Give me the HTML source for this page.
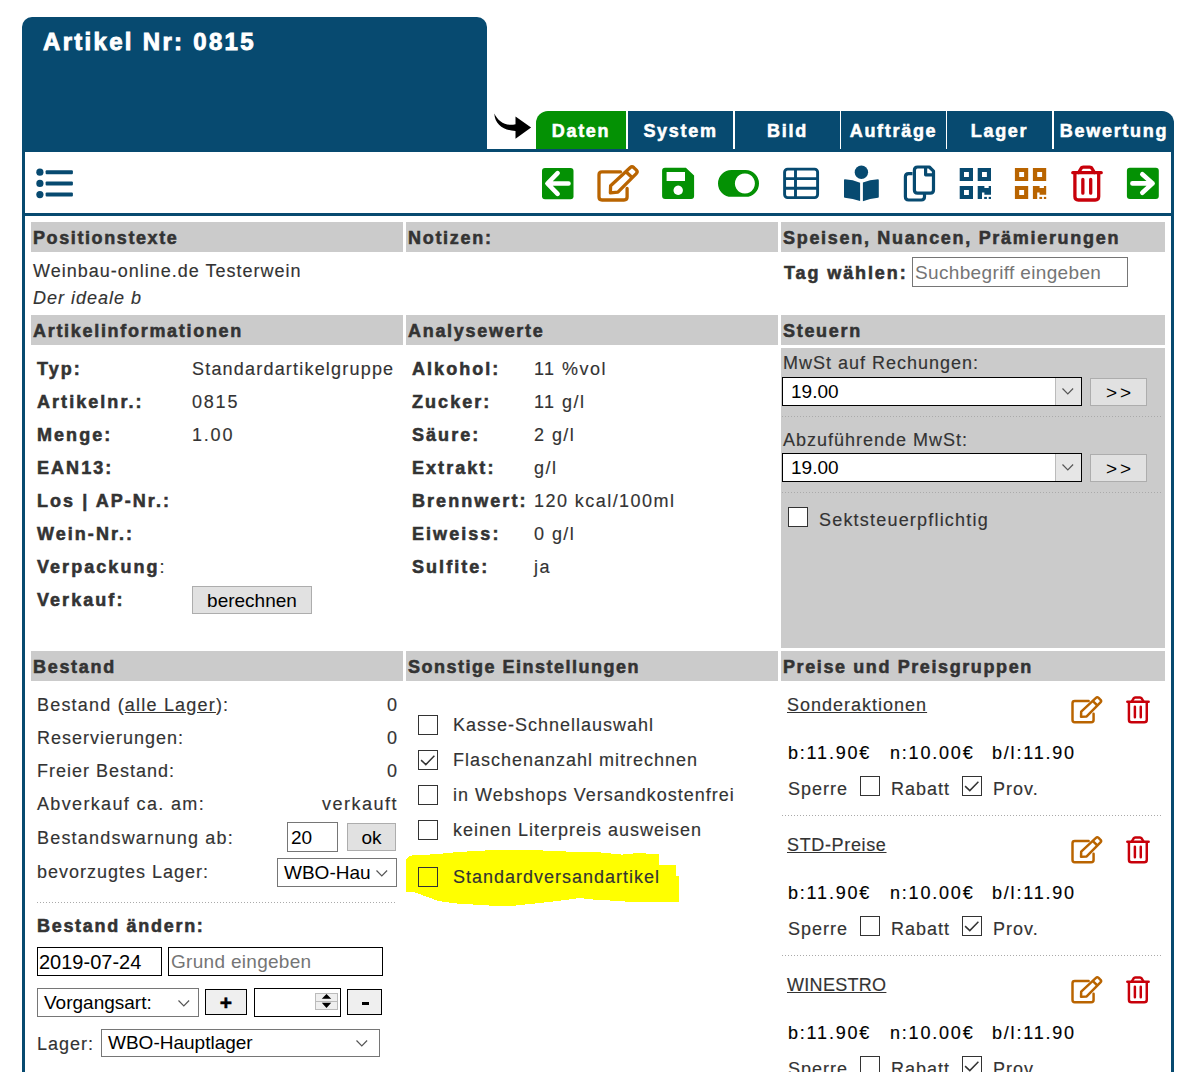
<!DOCTYPE html>
<html><head><meta charset="utf-8">
<style>
html,body{margin:0;padding:0;background:#fff;width:1190px;height:1072px;overflow:hidden;position:relative}
body{font-family:"Liberation Sans",sans-serif;color:#333}
div,span{box-sizing:border-box}
.a{position:absolute}
.blue{background:#074a70}
.t{position:absolute;font-size:18px;line-height:20px;white-space:nowrap;letter-spacing:1px;-webkit-text-stroke:0.15px currentColor}
.b{font-weight:bold;letter-spacing:1.7px;-webkit-text-stroke:0.55px currentColor}
.n{letter-spacing:1.8px}
.hd{position:absolute;background:#cbcbcb;height:30px}
.hd span{position:absolute;left:2px;top:6px;font-size:18px;line-height:20px;font-weight:bold;letter-spacing:1.7px;-webkit-text-stroke:0.55px #333;white-space:nowrap;color:#333}
.tab{position:absolute;top:111px;height:38px;background:#074a70;color:#fff;font-weight:bold;font-size:18px;letter-spacing:1.7px;-webkit-text-stroke:0.55px #fff;text-align:center;line-height:20px;padding-top:10px;white-space:nowrap}
.inp,.sel,.btn{position:absolute;background:#fff;border:1px solid #767676}
.inp span,.sel span,.btn span{position:absolute;font-size:19px;line-height:22px;color:#000;white-space:nowrap}
.btn{background:#e1e1e1;border-color:#adadad}
.bk{border-color:#000}
.dot{position:absolute;height:1px;background-image:linear-gradient(to right,#aaa 50%,transparent 50%);background-size:3px 1px}
.cb{position:absolute;width:20px;height:20px;border:1px solid #333;background:#fff}
.cb svg{position:absolute;left:-1px;top:-1px}
.dd{position:absolute;right:0;top:0;bottom:0;width:26px;background:#e6e6e6;border-left:1px solid #bbb}
.chev{position:absolute;width:12px;height:7px}
</style></head><body>
<div class="a blue" style="left:22px;top:17px;width:465px;height:135px;border-radius:10px 10px 0 0"></div>
<div class="t b" style="left:43px;top:29px;font-size:24px;line-height:26px;color:#fff;letter-spacing:2.3px;-webkit-text-stroke:0.9px #fff">Artikel Nr: 0815</div>
<div class="tab" style="left:536px;width:90px;background:#049104;border-top-left-radius:12px;">Daten</div>
<div class="tab" style="left:628px;width:105px;">System</div>
<div class="tab" style="left:735px;width:105px;">Bild</div>
<div class="tab" style="left:841px;width:105px;">Aufträge</div>
<div class="tab" style="left:947px;width:105px;">Lager</div>
<div class="tab" style="left:1054px;width:120px;border-top-right-radius:12px;">Bewertung</div>
<div class="a blue" style="left:22px;top:149px;width:1152px;height:3px"></div>
<div class="a blue" style="left:22px;top:149px;width:3px;height:930px"></div>
<div class="a blue" style="left:1171px;top:149px;width:3px;height:930px"></div>
<div class="a blue" style="left:25px;top:213px;width:1146px;height:3px"></div>
<div class="hd" style="left:31px;top:222px;width:372px"><span style="letter-spacing:1.6px">Positionstexte</span></div>
<div class="hd" style="left:406px;top:222px;width:372px"><span style="">Notizen:</span></div>
<div class="hd" style="left:781px;top:222px;width:384px"><span style="">Speisen, Nuancen, Prämierungen</span></div>
<div class="hd" style="left:31px;top:315px;width:372px"><span style="">Artikelinformationen</span></div>
<div class="hd" style="left:406px;top:315px;width:372px"><span style="">Analysewerte</span></div>
<div class="hd" style="left:781px;top:315px;width:384px"><span style="">Steuern</span></div>
<div class="hd" style="left:31px;top:651px;width:372px"><span style="">Bestand</span></div>
<div class="hd" style="left:406px;top:651px;width:372px"><span style="letter-spacing:1.5px">Sonstige Einstellungen</span></div>
<div class="hd" style="left:781px;top:651px;width:384px"><span style="letter-spacing:1.6px">Preise und Preisgruppen</span></div>
<div class="a" style="left:781px;top:348px;width:384px;height:300px;background:#cbcbcb"></div>
<div class="t " style="left:33px;top:261px;">Weinbau-online.de Testerwein</div>
<div class="t " style="left:33px;top:288px;font-style:italic">Der ideale b</div>
<div class="t b" style="left:784px;top:263px;letter-spacing:1.9px">Tag wählen:</div>
<div class="inp" style="left:912px;top:257px;width:216px;height:30px"><span style="left:2px;top:4px;color:#757575;letter-spacing:0.35px">Suchbegriff eingeben</span></div>
<div class="t b" style="left:37px;top:359px;letter-spacing:2.05px">Typ:</div>
<div class="t b" style="left:37px;top:392px;letter-spacing:2.05px">Artikelnr.:</div>
<div class="t b" style="left:37px;top:425px;letter-spacing:2.05px">Menge:</div>
<div class="t b" style="left:37px;top:458px;letter-spacing:2.05px">EAN13:</div>
<div class="t b" style="left:37px;top:491px;letter-spacing:2.05px">Los | AP-Nr.:</div>
<div class="t b" style="left:37px;top:524px;letter-spacing:2.05px">Wein-Nr.:</div>
<div class="t b" style="left:37px;top:557px;letter-spacing:2.05px">Verpackung<span style="font-weight:normal;-webkit-text-stroke:0.15px #333">:</span></div>
<div class="t b" style="left:37px;top:590px;letter-spacing:2.05px">Verkauf:</div>
<div class="t " style="left:192px;top:359px;letter-spacing:1.2px">Standardartikelgruppe</div>
<div class="t n" style="left:192px;top:392px;">0815</div>
<div class="t n" style="left:192px;top:425px;">1.00</div>
<div class="btn" style="left:192px;top:586px;width:120px;height:28px"><span style="left:0;right:0;top:3px;text-align:center">berechnen</span></div>
<div class="t b" style="left:412px;top:359px;letter-spacing:2.05px">Alkohol:</div>
<div class="t b" style="left:412px;top:392px;letter-spacing:2.05px">Zucker:</div>
<div class="t b" style="left:412px;top:425px;letter-spacing:2.05px">Säure:</div>
<div class="t b" style="left:412px;top:458px;letter-spacing:2.05px">Extrakt:</div>
<div class="t b" style="left:412px;top:491px;letter-spacing:2.05px">Brennwert:</div>
<div class="t b" style="left:412px;top:524px;letter-spacing:2.05px">Eiweiss:</div>
<div class="t b" style="left:412px;top:557px;letter-spacing:2.05px">Sulfite:</div>
<div class="t " style="left:534px;top:359px;letter-spacing:1.45px">11 %vol</div>
<div class="t " style="left:534px;top:392px;letter-spacing:1.45px">11 g/l</div>
<div class="t " style="left:534px;top:425px;letter-spacing:1.45px">2 g/l</div>
<div class="t " style="left:534px;top:458px;letter-spacing:1.45px">g/l</div>
<div class="t " style="left:534px;top:491px;letter-spacing:1.45px">120 kcal/100ml</div>
<div class="t " style="left:534px;top:524px;letter-spacing:1.45px">0 g/l</div>
<div class="t " style="left:534px;top:557px;letter-spacing:1.45px">ja</div>
<div class="t " style="left:783px;top:353px;">MwSt auf Rechungen:</div>
<div class="sel bk" style="left:782px;top:377px;width:300px;height:29px"><span style="left:8px;top:3px">19.00</span><div class="dd"><svg class="chev" style="left:6px;top:10px"><path d="M0.5,0.5 L5.8,5.8 L11.1,0.5" fill="none" stroke="#555" stroke-width="1.2"/></svg></div></div>
<div class="btn" style="left:1090px;top:378px;width:57px;height:28px"><span style="left:3px;right:0;top:3px;text-align:center;letter-spacing:3px">&gt;&gt;</span></div>
<div class="dot" style="left:782px;top:416px;width:381px"></div>
<div class="t " style="left:783px;top:430px;">Abzuführende MwSt:</div>
<div class="sel bk" style="left:782px;top:453px;width:300px;height:29px"><span style="left:8px;top:3px">19.00</span><div class="dd"><svg class="chev" style="left:6px;top:10px"><path d="M0.5,0.5 L5.8,5.8 L11.1,0.5" fill="none" stroke="#555" stroke-width="1.2"/></svg></div></div>
<div class="btn" style="left:1090px;top:454px;width:57px;height:28px"><span style="left:3px;right:0;top:3px;text-align:center;letter-spacing:3px">&gt;&gt;</span></div>
<div class="dot" style="left:782px;top:492px;width:381px"></div>
<div class="cb" style="left:788px;top:507px;"></div>
<div class="t " style="left:819px;top:510px;letter-spacing:1.2px">Sektsteuerpflichtig</div>
<div class="t " style="left:37px;top:695px;letter-spacing:1.2px">Bestand (<u>alle Lager</u>):</div>
<div class="t " style="left:37px;top:728px;">Reservierungen:</div>
<div class="t " style="left:37px;top:761px;">Freier Bestand:</div>
<div class="t " style="left:37px;top:794px;letter-spacing:1.35px">Abverkauf ca. am:</div>
<div class="t " style="left:37px;top:828px;letter-spacing:1.2px">Bestandswarnung ab:</div>
<div class="t " style="left:37px;top:862px;">bevorzugtes Lager:</div>
<div class="t" style="left:auto;right:792px;top:695px;letter-spacing:1px">0</div>
<div class="t" style="left:auto;right:792px;top:728px;letter-spacing:1px">0</div>
<div class="t" style="left:auto;right:792px;top:761px;letter-spacing:1px">0</div>
<div class="t" style="left:auto;right:792px;top:794px;letter-spacing:1.5px">verkauft</div>
<div class="inp" style="left:287px;top:822px;width:51px;height:30px"><span style="left:3px;top:4px">20</span></div>
<div class="btn" style="left:347px;top:823px;width:49px;height:28px"><span style="left:0;right:0;top:3px;text-align:center">ok</span></div>
<div class="sel" style="left:277px;top:858px;width:120px;height:29px"><span style="left:6px;top:3px">WBO-Hau</span><svg class="chev" style="right:8px;top:11px"><path d="M0.5,0.5 L5.8,5.8 L11.1,0.5" fill="none" stroke="#555" stroke-width="1.2"/></svg></div>
<div class="dot" style="left:37px;top:902px;width:359px"></div>
<div class="t b" style="left:37px;top:916px;">Bestand ändern:</div>
<div class="inp bk" style="left:37px;top:947px;width:125px;height:29px"><span style="left:1px;top:3px;font-size:20px">2019-07-24</span></div>
<div class="inp bk" style="left:168px;top:947px;width:215px;height:29px"><span style="left:2px;top:3px;color:#757575;letter-spacing:0.3px">Grund eingeben</span></div>
<div class="sel" style="left:37px;top:988px;width:162px;height:29px"><span style="left:6px;top:3px">Vorgangsart:</span><svg class="chev" style="right:8px;top:11px"><path d="M0.5,0.5 L5.8,5.8 L11.1,0.5" fill="none" stroke="#555" stroke-width="1.2"/></svg></div>
<div class="btn bk" style="left:205px;top:989px;width:42px;height:26px;background:#efefef"><span style="left:0;right:0;top:2px;text-align:center;font-weight:bold;font-size:21px;-webkit-text-stroke:0.5px #000">+</span></div>
<div class="inp bk" style="left:254px;top:988px;width:87px;height:29px"></div>
<svg class="a" style="left:315px;top:993px" width="24" height="18"><rect x="0.5" y="0.5" width="22" height="16" fill="#efefef" stroke="#bbb"/><line x1="1" y1="8.5" x2="22" y2="8.5" stroke="#bbb"/><path d="M6.8,5.7 L11.5,1 L16.2,5.7 Z M6.8,9.8 L16.2,9.8 L11.5,15 Z" fill="#000"/></svg>
<div class="btn bk" style="left:347px;top:989px;width:35px;height:26px;background:#efefef"><div class="a" style="left:14px;top:12px;width:7px;height:3px;background:#000"></div></div>
<div class="t " style="left:37px;top:1034px;">Lager:</div>
<div class="sel" style="left:101px;top:1029px;width:279px;height:28px"><span style="left:6px;top:2px">WBO-Hauptlager</span><svg class="chev" style="right:11px;top:10px"><path d="M0.5,0.5 L5.8,5.8 L11.1,0.5" fill="none" stroke="#555" stroke-width="1.2"/></svg></div>
<svg class="a" style="left:0;top:0" width="1190" height="1072" shape-rendering="crispEdges"><path fill="#ffff00" d="M406,860 L410,855.6 L437.3,854.1 L459.5,851.9 L494.8,850 L520,849.5 L580,852.1 L597.1,852.1 L622.4,854.6 L637.5,853.1 L658.7,854.1 L658.7,865.2 L675.8,865.2 L675.8,876.3 L678.8,876.3 L678.8,902 L632.4,902 L610.3,900.5 L593.1,899.5 L580,898 L551,901.8 L516,905.5 L488.7,905.5 L456.5,903.5 L438.3,901 L415.1,892.4 L406,891.9 Z"/></svg>
<div class="cb" style="left:418px;top:715px;"></div>
<div class="t " style="left:453px;top:715px;">Kasse-Schnellauswahl</div>
<div class="cb" style="left:418px;top:750px;"><svg width="20" height="20"><path d="M3.1,10.1 L7.8,14.6 L16.4,5.8" fill="none" stroke="#333" stroke-width="1.5"/></svg></div>
<div class="t " style="left:453px;top:750px;">Flaschenanzahl mitrechnen</div>
<div class="cb" style="left:418px;top:785px;"></div>
<div class="t " style="left:453px;top:785px;">in Webshops Versandkostenfrei</div>
<div class="cb" style="left:418px;top:820px;"></div>
<div class="t " style="left:453px;top:820px;">keinen Literpreis ausweisen</div>
<div class="cb" style="left:418px;top:867px;background:transparent"></div>
<div class="t " style="left:453px;top:867px;">Standardversandartikel</div>
<div class="t " style="left:787px;top:695px;letter-spacing:1px"><u>Sonderaktionen</u></div>
<div class="t n" style="left:788px;top:743px;color:#000">b:11.90€</div>
<div class="t n" style="left:890px;top:743px;color:#000">n:10.00€</div>
<div class="t n" style="left:992px;top:743px;color:#000">b/l:11.90</div>
<div class="t " style="left:788px;top:779px;">Sperre</div>
<div class="cb" style="left:860px;top:776px;"></div>
<div class="t " style="left:891px;top:779px;">Rabatt</div>
<div class="cb" style="left:962px;top:776px;"><svg width="20" height="20"><path d="M3.1,10.1 L7.8,14.6 L16.4,5.8" fill="none" stroke="#333" stroke-width="1.5"/></svg></div>
<div class="t " style="left:993px;top:779px;">Prov.</div>
<div class="dot" style="left:782px;top:815px;width:381px"></div>
<div class="t " style="left:787px;top:835px;letter-spacing:0.65px"><u>STD-Preise</u></div>
<div class="t n" style="left:788px;top:883px;color:#000">b:11.90€</div>
<div class="t n" style="left:890px;top:883px;color:#000">n:10.00€</div>
<div class="t n" style="left:992px;top:883px;color:#000">b/l:11.90</div>
<div class="t " style="left:788px;top:919px;">Sperre</div>
<div class="cb" style="left:860px;top:916px;"></div>
<div class="t " style="left:891px;top:919px;">Rabatt</div>
<div class="cb" style="left:962px;top:916px;"><svg width="20" height="20"><path d="M3.1,10.1 L7.8,14.6 L16.4,5.8" fill="none" stroke="#333" stroke-width="1.5"/></svg></div>
<div class="t " style="left:993px;top:919px;">Prov.</div>
<div class="dot" style="left:782px;top:955px;width:381px"></div>
<div class="t " style="left:787px;top:975px;letter-spacing:0.3px"><u>WINESTRO</u></div>
<div class="t n" style="left:788px;top:1023px;color:#000">b:11.90€</div>
<div class="t n" style="left:890px;top:1023px;color:#000">n:10.00€</div>
<div class="t n" style="left:992px;top:1023px;color:#000">b/l:11.90</div>
<div class="t " style="left:788px;top:1059px;">Sperre</div>
<div class="cb" style="left:860px;top:1056px;"></div>
<div class="t " style="left:891px;top:1059px;">Rabatt</div>
<div class="cb" style="left:962px;top:1056px;"><svg width="20" height="20"><path d="M3.1,10.1 L7.8,14.6 L16.4,5.8" fill="none" stroke="#333" stroke-width="1.5"/></svg></div>
<div class="t " style="left:993px;top:1059px;">Prov.</div>
<svg class="a" style="left:0;top:0" width="1190" height="1072" viewBox="0 0 1190 1072">
<defs>
<g id="ied" fill="none" stroke-width="3.3" stroke-linejoin="round" stroke-linecap="round">
<path d="M620.5,171.8 H602 Q599,171.8 599,174.8 V197 Q599,200 602,200 H624 Q627.1,200 627.1,197 V188.5"/>
<path d="M610.4,192.8 L610.6,185.8 L630.3,167.5 Q632,166 633.8,167.6 L636.4,170.2 Q638,172 636.3,173.6 L617.9,192.2 Z"/>
<path d="M626.5,172.2 L631.5,177"/>
</g>
<g id="itr" fill="none" stroke-width="3.3" stroke-linejoin="round" stroke-linecap="round">
<path d="M1072.8,172.7 H1101.2"/>
<path d="M1078.6,172.5 L1081.6,167.6 Q1082.4,167.1 1083.5,167.1 H1089.5 Q1090.6,167.1 1091.4,167.6 L1094.4,172.5"/>
<path d="M1074.9,174 V196.5 Q1074.9,200 1078.4,200 H1095.2 Q1098.7,200 1098.7,196.5 V174"/>
<path d="M1082.85,179.4 V193.2 M1090.7,179.4 V193.2"/>
</g>
</defs>
<!-- list icon -->
<g fill="#074a70">
<circle cx="39.9" cy="172.2" r="3.6"/><circle cx="39.9" cy="183.4" r="3.6"/><circle cx="39.9" cy="194.6" r="3.6"/>
<rect x="45.6" y="170.2" width="27.3" height="4" rx="1"/><rect x="45.6" y="181.4" width="27.3" height="4" rx="1"/><rect x="45.6" y="192.6" width="27.3" height="4" rx="1"/>
</g>
<!-- arrow black -->
<path fill="#000" d="M494.3,113.5 C498,121 505,126.5 515.5,124.2 L515.5,116.4 L531.1,127.5 L515.5,138.7 L515.5,130.9 C504,130.5 495,125 494.3,113.5 Z"/>
<!-- back -->
<rect x="542" y="168" width="31.5" height="31.3" rx="3" fill="#049104"/>
<path d="M568.5,183.5 H548 M557.6,173.2 L547.4,183.5 L557.6,193.8" fill="none" stroke="#fff" stroke-width="4.6" stroke-linecap="round" stroke-linejoin="round"/>
<!-- edit -->
<use href="#ied" stroke="#b96400"/>
<!-- save -->
<path fill="#049104" fill-rule="evenodd" d="M665,167.7 H685.9 L694.1,175.5 V196.1 Q694.1,199.1 691.1,199.1 H665.1 Q662.1,199.1 662.1,196.1 V170.7 Q662.1,167.7 665,167.7 Z M666.6,172 V181 H685 V172 Z M678.2,185.6 A4.7,4.7 0 1 0 678.21,185.6 Z"/>
<!-- toggle -->
<path fill="#049104" fill-rule="evenodd" d="M731.4,170 H745.6 A13.4,13.4 0 0 1 745.6,196.8 H731.4 A13.4,13.4 0 0 1 731.4,170 Z M744.9,173.5 A10,10 0 1 0 744.91,173.5 Z"/>
<!-- table -->
<g fill="none" stroke="#074a70" stroke-width="2.9">
<rect x="784.6" y="169.1" width="33" height="28.5" rx="3"/>
<path d="M784.6,178.6 H817.6 M784.6,188.2 H817.6 M795.5,169.1 V197.6"/>
</g>
<!-- reader -->
<g fill="#074a70">
<circle cx="861.4" cy="172.2" r="6.7"/>
<path d="M844.8,179.3 Q853,179.6 860.1,182.7 V201 Q853,198.6 844.8,197.8 Q844,197.6 844,196.8 V180.2 Q844,179.3 844.8,179.3 Z"/>
<path d="M878,179.3 Q869.8,179.6 862.9,182.5 V201.2 Q869.8,198.6 878,197.8 Q878.8,197.6 878.8,196.8 V180.2 Q878.8,179.3 878,179.3 Z"/>
</g>
<!-- copy -->
<g fill="none" stroke="#074a70" stroke-width="3.2" stroke-linejoin="round">
<path d="M912.5,173.6 H908.6 Q905.4,173.6 905.4,176.8 V196.8 Q905.4,200 908.6,200 H921.3 Q924.5,200 924.5,196.8 V194"/>
<path d="M917.6,167 H929.3 L933.5,171.2 V190 Q933.5,193.2 930.3,193.2 H917.6 Q914.4,193.2 914.4,190 V170.2 Q914.4,167 917.6,167 Z"/>
<path d="M925.6,167 V174.8 H933.5"/>
</g>
<!-- qr -->
<g fill="#074a70"><g id="qr" fill-rule="evenodd">
<path d="M959.7,167.9 H973 V181 H959.7 Z M964,172 V176.9 H968.9 V172 Z"/>
<path d="M977.7,167.9 H991 V181 H977.7 Z M982,172 V176.9 H986.9 V172 Z"/>
<path d="M959.7,185.9 H973 V199 H959.7 Z M964,190 V194.9 H968.9 V190 Z"/>
<path d="M977.7,185.9 H984.4 V188 H988.7 V185.9 H991 V194.7 H984.4 V192.4 H982 V199 H977.7 Z"/>
<rect x="984.2" y="196.9" width="2.7" height="2.1"/><rect x="988.7" y="196.9" width="2.3" height="2.1"/>
</g></g>
<use href="#qr" x="55.2" fill="#b96400"/>
<!-- trash -->
<use href="#itr" stroke="#c8000a"/>
<!-- forward -->
<rect x="1126.9" y="167.7" width="31.9" height="31.3" rx="3" fill="#049104"/>
<path d="M1132.4,183.4 H1152.5 M1142.3,174.2 L1152.6,183.4 L1142.3,192.7" fill="none" stroke="#fff" stroke-width="4.6" stroke-linecap="round" stroke-linejoin="round"/>
<!-- small price icons -->
<use href="#ied" stroke="#b96400" transform="translate(1071,696) scale(0.75) translate(-597,-165)"/>
<use href="#itr" stroke="#c8000a" transform="translate(1126,696) scale(0.75) translate(-1071,-165)"/>
<use href="#ied" stroke="#b96400" transform="translate(1071,836) scale(0.75) translate(-597,-165)"/>
<use href="#itr" stroke="#c8000a" transform="translate(1126,836) scale(0.75) translate(-1071,-165)"/>
<use href="#ied" stroke="#b96400" transform="translate(1071,976) scale(0.75) translate(-597,-165)"/>
<use href="#itr" stroke="#c8000a" transform="translate(1126,976) scale(0.75) translate(-1071,-165)"/>
</svg>
</body></html>
